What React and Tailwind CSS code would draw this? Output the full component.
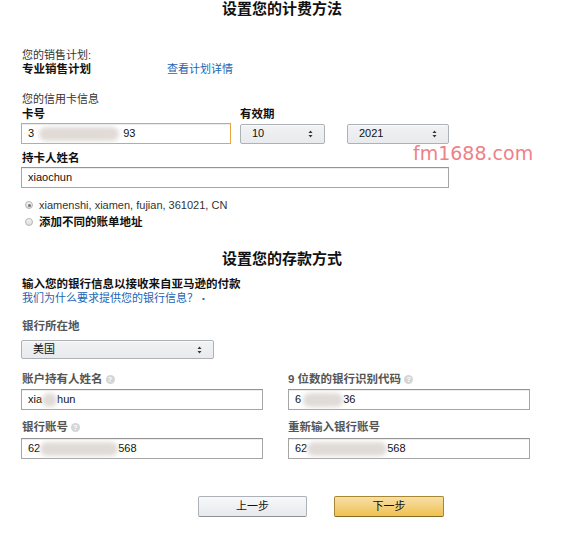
import React from 'react'

const font = "font-['Liberation_Sans','Noto_Sans_CJK_SC',sans-serif]"

function Blob({ w }) {
    return <span className={`inline-block h-[14px] align-middle rounded-full bg-[#e0dbd7] blur-[2px] ${w}`} />
}

function Arrows() {
    return (
        <svg width="5" height="8" viewBox="0 0 5 8" className="shrink-0">
            <path d="M2.5 0.5 L4.5 3 L0.5 3 Z" fill="#333" />
            <path d="M2.5 7.5 L4.5 5 L0.5 5 Z" fill="#333" />
        </svg>
    )
}

function Select({ value, className }) {
    return (
        <div className={`flex items-center justify-between h-[20px] px-[11px] rounded-[2px] border border-[#adb1b8] bg-gradient-to-b from-[#f1f2f4] to-[#e9eaed] shadow-[0_1px_0_rgba(255,255,255,0.6)_inset] text-[11px] text-[#111] ${className}`}>
            <span>{value}</span>
            <Arrows />
        </div>
    )
}

function Field({ children, className }) {
    return (
        <div className={`flex items-center h-[21px] px-[6px] border border-[#a6a6a6] border-t-[#949494] bg-white shadow-[0_1px_0_rgba(255,255,255,0.5),0_1px_0_rgba(0,0,0,0.07)_inset] text-[11px] text-[#111] whitespace-nowrap ${className}`}>
            {children}
        </div>
    )
}

function Help() {
    return (
        <span className="inline-flex items-center justify-center w-[9px] h-[9px] ml-[3px] rounded-full bg-[#d5d5d5] text-white text-[7px] font-bold leading-none align-middle">?</span>
    )
}

function Radio({ checked }) {
    return (
        <span className="inline-flex items-center justify-center w-[8px] h-[8px] rounded-full border border-[#b5b5b5] bg-gradient-to-b from-[#f4f4f4] to-[#dcdcdc]">
            {checked && <span className="w-[3px] h-[3px] rounded-full bg-[#777]" />}
        </span>
    )
}

export default function App() {
    return (
        <div className={`relative w-[574px] h-[533px] bg-white overflow-hidden ${font} text-[11px] text-[#222]`}>
            <h1 className="pr-[10px] text-center text-[15px] font-bold leading-[16px] mt-[1px] text-[#111]">设置您的计费方法</h1>

            <div className="pl-[22px]">
                <p className="mt-[31px] leading-[14px] text-[#333]">您的销售计划:</p>
                <div className="flex leading-[14px]">
                    <span className="w-[145px] font-bold text-[11.5px] text-[#111]">专业销售计划</span>
                    <a className="text-[#1a64b4]">查看计划详情</a>
                </div>

                <p className="mt-[16px] leading-[14px] text-[#333]">您的信用卡信息</p>
                <div className="flex mt-[1px] leading-[14px] font-bold text-[11.5px] text-[#111]">
                    <span className="w-[218px]">卡号</span>
                    <span>有效期</span>
                </div>
                <div className="flex items-center mt-[2px] ml-[-1px]">
                    <Field className="w-[210px] !border-[#e9a444] shadow-[0_0_3px_1px_rgba(235,150,40,0.45)]">
                        <span>3</span>
                        <Blob w="w-[80px] ml-[5px]" />
                        <span className="ml-[4px]">93</span>
                    </Field>
                    <Select value="10" className="ml-[9px] w-[85px]" />
                    <Select value="2021" className="ml-[22px] w-[102px]" />
                </div>

                <p className="mt-[7px] leading-[14px] font-bold text-[11.5px] text-[#111]">持卡人姓名</p>
                <Field className="mt-[2px] ml-[-1px] w-[428px]">xiaochun</Field>

                <div className="flex items-center gap-[6px] mt-[10px] leading-[14px] pl-[3px] text-[#333]">
                    <Radio checked />
                    <span>xiamenshi, xiamen, fujian, 361021, CN</span>
                </div>
                <div className="flex items-center gap-[6px] mt-[3px] leading-[14px] pl-[3px]">
                    <Radio />
                    <span className="font-bold text-[11.5px] text-[#111]">添加不同的账单地址</span>
                </div>
            </div>

            <h2 className="pr-[10px] mt-[22px] text-center text-[15px] font-bold leading-[16px] text-[#111]">设置您的存款方式</h2>

            <div className="pl-[22px]">
                <p className="mt-[10px] leading-[14px] font-bold text-[11.5px] text-[#111]">输入您的银行信息以接收来自亚马逊的付款</p>
                <p className="leading-[14px] text-[#1a64b4]">我们为什么要求提供您的银行信息？<span className="ml-[4px] text-[8px] align-middle">•</span></p>

                <p className="mt-[13px] leading-[14px] font-bold text-[11.5px] text-[#555]">银行所在地</p>
                <Select value="美国" className="mt-[7px] ml-[-1px] w-[193px] !h-[19px]" />

                <div className="flex mt-[13px] leading-[14px] font-bold text-[11.5px] text-[#555]">
                    <span className="w-[266px] flex items-center">账户持有人姓名<Help /></span>
                    <span className="flex items-center">9 位数的银行识别代码<Help /></span>
                </div>
                <div className="flex mt-[3px] ml-[-1px] gap-[25px]">
                    <Field className="w-[242px]">
                        <span>xia</span>
                        <Blob w="w-[15px]" />
                        <span>hun</span>
                    </Field>
                    <Field className="w-[242px]">
                        <span>6</span>
                        <Blob w="w-[40px] ml-[2px]" />
                        <span>36</span>
                    </Field>
                </div>

                <div className="flex mt-[10px] leading-[14px] font-bold text-[11.5px] text-[#555]">
                    <span className="w-[266px] flex items-center">银行账号<Help /></span>
                    <span>重新输入银行账号</span>
                </div>
                <div className="flex mt-[4px] ml-[-1px] gap-[25px]">
                    <Field className="w-[242px]">
                        <span>62</span>
                        <Blob w="w-[78px]" />
                        <span>568</span>
                    </Field>
                    <Field className="w-[242px]">
                        <span>62</span>
                        <Blob w="w-[80px]" />
                        <span>568</span>
                    </Field>
                </div>
            </div>

            <div className="flex mt-[37px] pl-[198px] gap-[27px]">
                <button className="w-[109px] h-[21px] rounded-[2px] border border-[#adb1b8] border-b-[#8d9096] bg-gradient-to-b from-[#f7f8fa] to-[#e7e9ec] text-[11px] text-[#111]">上一步</button>
                <button className="w-[110px] h-[21px] rounded-[2px] border border-[#a88734] border-b-[#846a29] bg-gradient-to-b from-[#f7dfa5] to-[#f0c14b] text-[11px] text-[#111]">下一步</button>
            </div>

            <span className="absolute left-[413px] top-[141px] text-[19px] leading-[24px] text-[#f07f86] font-['DejaVu_Sans',sans-serif]">fm1688.com</span>
        </div>
    )
}
